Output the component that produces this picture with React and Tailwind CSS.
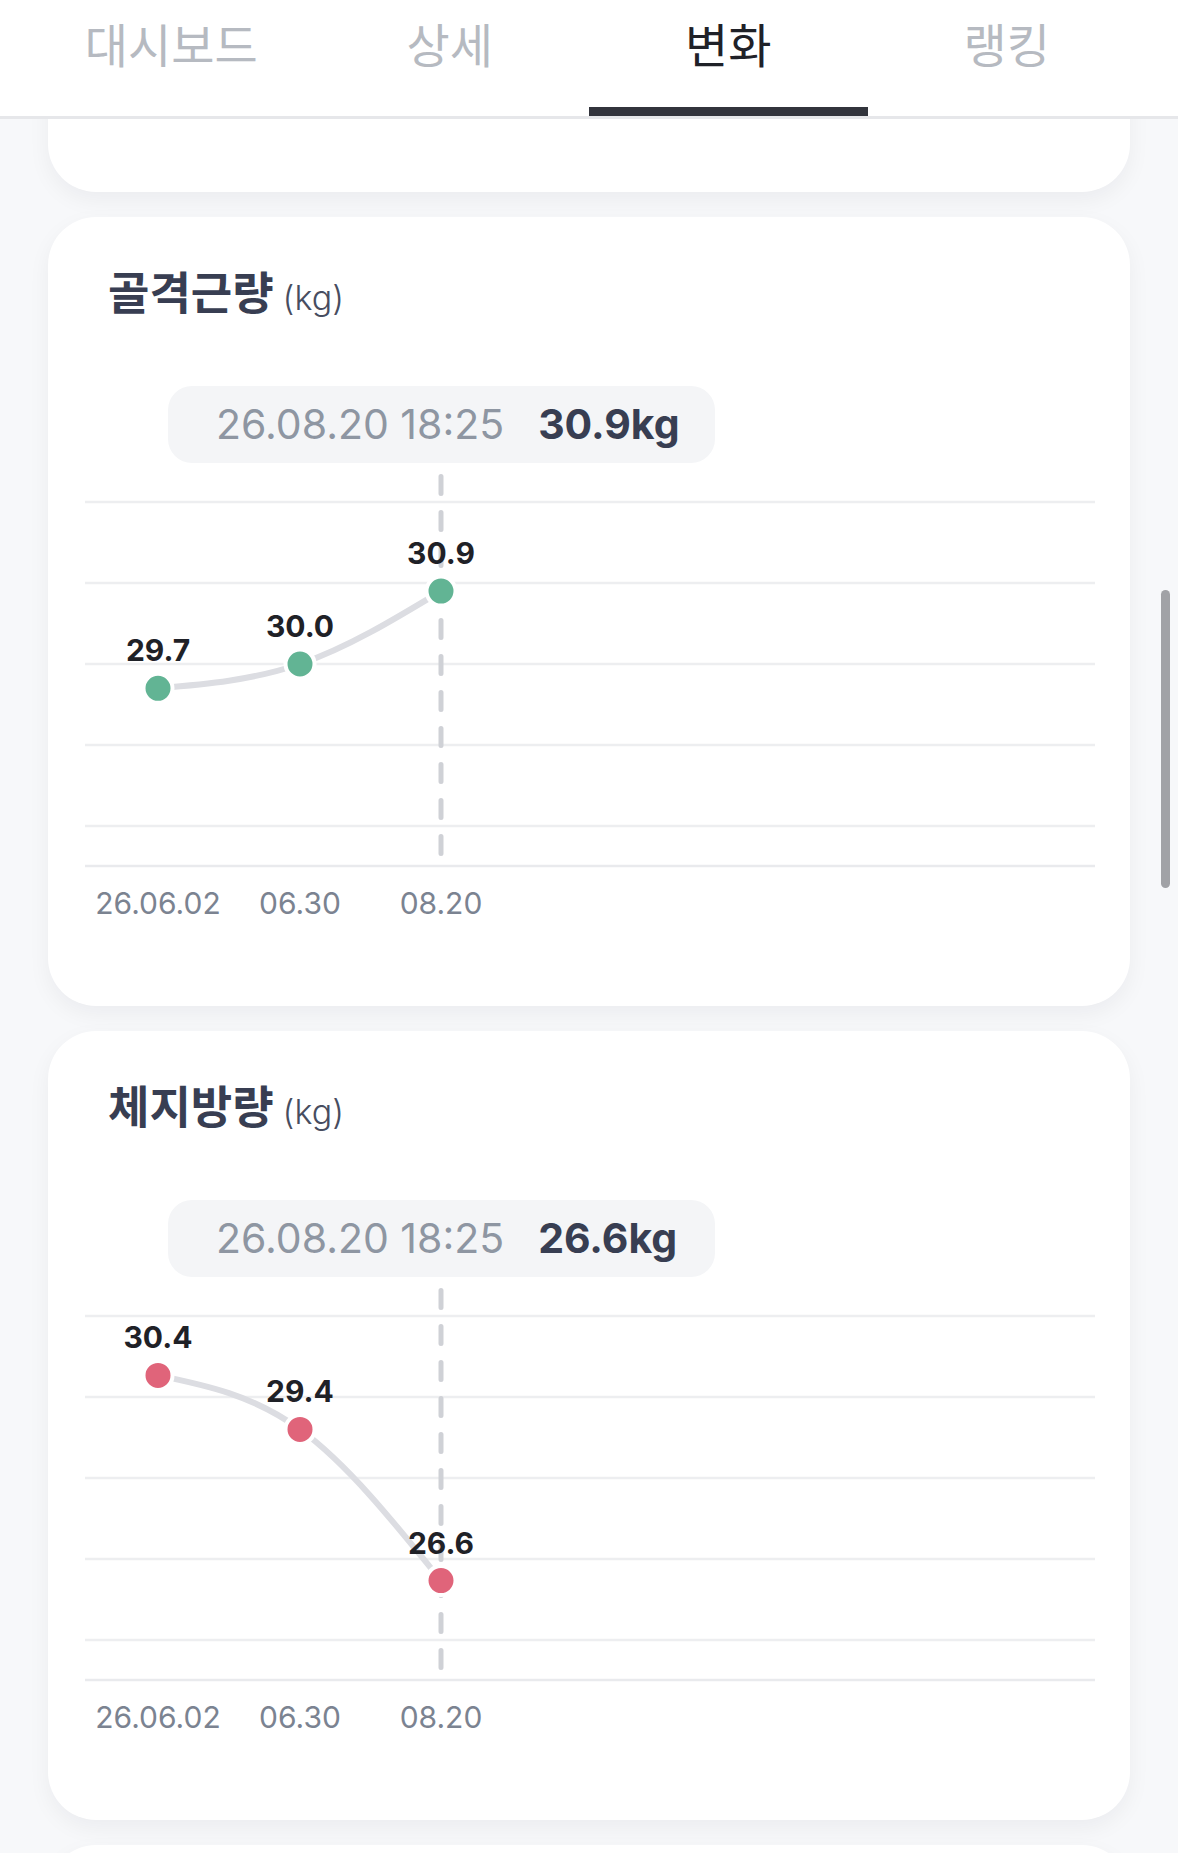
const TABS = ['대시보드', '상세', '변화', '랭킹']

const XS = [73, 215, 356]
const XLABELS = ['26.06.02', '06.30', '08.20']
const GRID = [116, 197, 278, 359, 440]

const CHARTS = [
  {
    title: '골격근량',
    color: '#62b494',
    values: [29.7, 30.0, 30.9],
    top: 32,
    perKg: 81,
    date: '26.08.20 18:25',
    value: '30.9kg',
  },
  {
    title: '체지방량',
    color: '#e0647a',
    values: [30.4, 29.4, 26.6],
    top: 31.5,
    perKg: 54,
    date: '26.08.20 18:25',
    value: '26.6kg',
  },
]

// d3 curveMonotoneX, written out by hand
function monotonePath(pts) {
  const n = pts.length
  const d = []
  for (let i = 0; i < n - 1; i++) d.push((pts[i + 1][1] - pts[i][1]) / (pts[i + 1][0] - pts[i][0]))
  const t = new Array(n).fill(0)
  for (let i = 1; i < n - 1; i++) {
    const h0 = pts[i][0] - pts[i - 1][0]
    const h1 = pts[i + 1][0] - pts[i][0]
    const s0 = d[i - 1]
    const s1 = d[i]
    const p = (s0 * h1 + s1 * h0) / (h0 + h1)
    t[i] = (Math.sign(s0) + Math.sign(s1)) * Math.min(Math.abs(s0), Math.abs(s1), 0.5 * Math.abs(p)) || 0
  }
  t[0] = (3 * d[0] - t[1]) / 2
  t[n - 1] = (3 * d[n - 2] - t[n - 2]) / 2
  let path = `M${pts[0][0]},${pts[0][1]}`
  for (let i = 0; i < n - 1; i++) {
    const [x0, y0] = pts[i]
    const [x1, y1] = pts[i + 1]
    const dx = (x1 - x0) / 3
    path += ` C${x0 + dx},${y0 + dx * t[i]} ${x1 - dx},${y1 - dx * t[i + 1]} ${x1},${y1}`
  }
  return path
}

function ChartCard({ chart }) {
  const pts = chart.values.map((v, i) => [XS[i], GRID[0] + (chart.top - v) * chart.perKg])

  return (
    <section className="rounded-[48px] bg-white pt-[52px] pb-[60px] shadow-[0_8px_22px_rgba(20,24,40,0.05)]">
      <h2 className="h-[50px] pl-[60px] leading-[50px] whitespace-nowrap text-[#383e52]">
        <span className="text-[45px] font-bold">{chart.title}</span>
        <span className="ml-[9px] text-[34px] font-light text-[#474d60]">(kg)</span>
      </h2>

      <div className="relative mx-[37px] mt-[67px] h-[560px]">
        <svg width="1010" height="560" className="absolute left-0 top-0">
          {GRID.map((y) => (
            <line key={y} x1="0" x2="1010" y1={y} y2={y} stroke="#edeef0" strokeWidth="2.5" />
          ))}
          <line x1="0" x2="1010" y1="480" y2="480" stroke="#e9eaed" strokeWidth="2.5" />
          <line
            x1={XS[2]}
            x2={XS[2]}
            y1="90.5"
            y2="468.5"
            stroke="#cfd1d6"
            strokeWidth="5"
            strokeLinecap="round"
            strokeDasharray="17 19"
          />
          <path d={monotonePath(pts)} fill="none" stroke="#dcdde2" strokeWidth="6" strokeLinecap="round" />
          {pts.map(([x, y], i) => (
            <g key={i}>
              <circle cx={x} cy={y} r="14.5" fill={chart.color} stroke="#ffffff" strokeWidth="4" />
              <text
                x={x}
                y={y - 27}
                textAnchor="middle"
                fontSize="30"
                fontWeight="700"
                fill="#1f2127"
              >
                {chart.values[i].toFixed(1)}
              </text>
            </g>
          ))}
          {XLABELS.map((label, i) => (
            <text key={label} x={XS[i]} y="528" textAnchor="middle" fontSize="30" fill="#7b8391">
              {label}
            </text>
          ))}
        </svg>

        <div className="absolute left-[83px] top-0 flex h-[77px] w-[547px] items-center gap-[34px] rounded-[24px] bg-[#f4f5f7] pl-[48px]">
          <span className="text-[41px] text-[#8e96a2]">{chart.date}</span>
          <span className="text-[41px] font-bold text-[#383e52]">{chart.value}</span>
        </div>
      </div>
    </section>
  )
}

export default function App() {
  return (
    <div className="relative h-[1853px] w-[1178px] overflow-hidden bg-[#f7f8fa] font-[family-name:Inter,'Noto_Sans_CJK_KR',sans-serif]">
      <header className="relative z-10 flex h-[119px] border-b-[3px] border-[#e6e7ea] bg-white px-[32px]">
        {TABS.map((tab) => {
          const active = tab === '변화'
          return (
            <div key={tab} className="relative flex-1 pt-[16px] text-center">
              <span
                className={`text-[47px] leading-[60px] ${active ? 'text-[#1f2128]' : 'text-[#b6bac1]'}`}
              >
                {tab}
              </span>
              {active && <div className="absolute inset-x-0 bottom-0 h-[9px] bg-[#32343c]" />}
            </div>
          )
        })}
      </header>

      <main className="flex flex-col gap-[25px] px-[48px]">
        <div className="-mt-[227px] h-[300px] rounded-[48px] bg-white shadow-[0_8px_22px_rgba(20,24,40,0.05)]" />
        {CHARTS.map((chart) => (
          <ChartCard key={chart.title} chart={chart} />
        ))}
        <div className="h-[300px] rounded-[48px] bg-white shadow-[0_8px_22px_rgba(20,24,40,0.05)]" />
      </main>

      <div className="absolute left-[1161px] top-[590px] h-[298px] w-[9px] rounded-full bg-[#a1a2a6]" />
    </div>
  )
}
